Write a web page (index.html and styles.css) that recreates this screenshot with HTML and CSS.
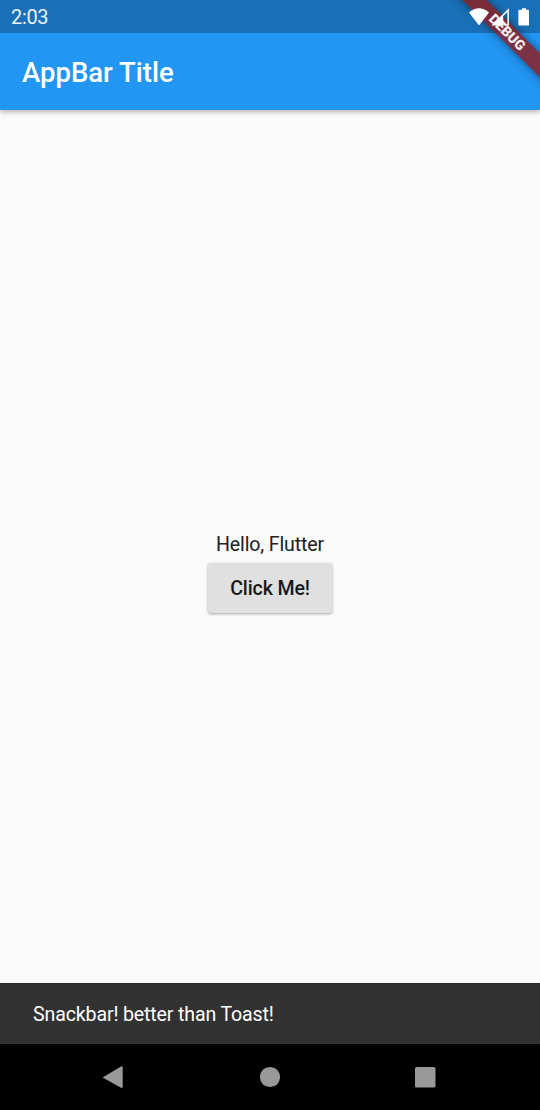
FILE: index.html
```html
<!DOCTYPE html>
<html lang="en">
<head>
<meta charset="utf-8">
<title>AppBar Title</title>
<link rel="stylesheet" href="styles.css">
</head>
<body>
<div class="screen">
  <header class="app-bar">
    <h1 class="app-title">AppBar Title</h1>
  </header>
  <main class="content">
    <p class="greeting">Hello, Flutter</p>
    <button class="raised-button" type="button">Click Me!</button>
  </main>
  <div class="snackbar">Snackbar! better than Toast!</div>
  <nav class="nav-bar">
    <svg class="nav-icon" viewBox="0 0 24 24"><path d="M2.4 12.1 20 1.5Q21.7.6 21.7 2.3V21.7Q21.7 23.6 20.1 22.7L2.4 13Q1.6 12.5 2.4 12.1Z"/></svg>
    <svg class="nav-icon" viewBox="0 0 24 24"><circle cx="13" cy="12" r="10.1"/></svg>
    <svg class="nav-icon" viewBox="0 0 24 24"><rect x="2" y="2" width="20.5" height="20.5" rx="1.6"/></svg>
  </nav>
  <div class="banner-corner"><div class="debug-banner">DEBUG</div></div>
  <div class="status-bar">
    <span class="clock">2:03</span>
    <svg class="status-icons" viewBox="0 0 64 24">
      <path d="M1 7.5Q10.8-.8 21 7.5L11 20.4Z"/>
      <path d="M23.3 20.6 40.9 3.2V20.6Z M35.2 19.2H39.4V6.9L35.2 11.1Z" fill-rule="evenodd"/>
      <path d="M51.4 4.7H54V3.3H58V4.7H60.2Q61 4.7 61 5.5V19.7Q61 20.6 60.2 20.6H51.3Q50.4 20.6 50.4 19.7V5.6Q50.4 4.7 51.4 4.7Z"/>
    </svg>
  </div>
</div>
</body>
</html>
```
FILE: styles.css
```css
* { box-sizing: border-box; }

body {
  margin: 0;
  font-family: Roboto, "Liberation Sans", sans-serif;
}

.screen {
  position: relative;
  display: flex;
  flex-direction: column;
  height: 1110px;
  width: 540px;
  overflow: hidden;
  background: #fafafa;
}

.app-bar {
  display: flex;
  align-items: center;
  height: 110px;
  padding: 35px 22px 0;
  background: linear-gradient(#1970b6 33px, #2196f3 33px);
  box-shadow: 0 2px 5px rgba(0, 0, 0, .28);
}

.app-title {
  margin: 0;
  color: #fff;
  font-size: 27.5px;
  font-weight: 500;
  line-height: 32px;
}

.content {
  flex: 1;
  display: flex;
  flex-direction: column;
  align-items: center;
  justify-content: center;
  gap: 7px;
  padding-top: 54px;
}

.greeting {
  margin: 0;
  color: #212121;
  font-size: 19.6px;
  line-height: 22px;
  letter-spacing: -.15px;
}

.raised-button {
  width: 124px;
  height: 50px;
  padding: 2px 0 0;
  border: 0;
  border-radius: 3px;
  background: #e0e0e0;
  box-shadow: 0 1px 3px rgba(0, 0, 0, .34);
  color: #191919;
  font: 500 19.6px/22px Roboto, "Liberation Sans", sans-serif;
  letter-spacing: -.15px;
}

.snackbar {
  display: flex;
  align-items: center;
  height: 61px;
  padding: 1px 0 0 33px;
  border-top: 1px solid #292929;
  background: #323232;
  color: #fff;
  font-size: 19.6px;
  letter-spacing: -.15px;
}

.nav-bar {
  display: flex;
  justify-content: space-between;
  height: 66px;
  padding: 21px 103px 0 101px;
  background: #000;
}

.nav-icon {
  width: 24px;
  height: 24px;
  fill: #999;
}

/* Diagonal ribbon clipped to the top-right corner */
.banner-corner {
  position: absolute;
  top: 0;
  right: 0;
  width: 110px;
  height: 108px;
  overflow: hidden;
}

.debug-banner {
  position: absolute;
  top: 24px;
  left: 7px;
  width: 140px;
  height: 17px;
  transform: rotate(45deg);
  background: rgba(145, 27, 30, .81);
  box-shadow: 0 0 8px rgba(0, 0, 0, .5);
  color: #f6f0f2;
  font-size: 14px;
  font-weight: 900;
  line-height: 17px;
  text-align: center;
}

.status-bar {
  position: absolute;
  top: 0;
  left: 0;
  display: flex;
  align-items: center;
  justify-content: space-between;
  width: 100%;
  height: 33px;
  padding: 0 8px 0 11px;
}

.clock {
  padding-top: 1px;
  color: #e8f1f8;
  font-size: 20px;
  letter-spacing: -.35px;
}

.status-icons {
  width: 64px;
  height: 24px;
  fill: #fff;
}
```
